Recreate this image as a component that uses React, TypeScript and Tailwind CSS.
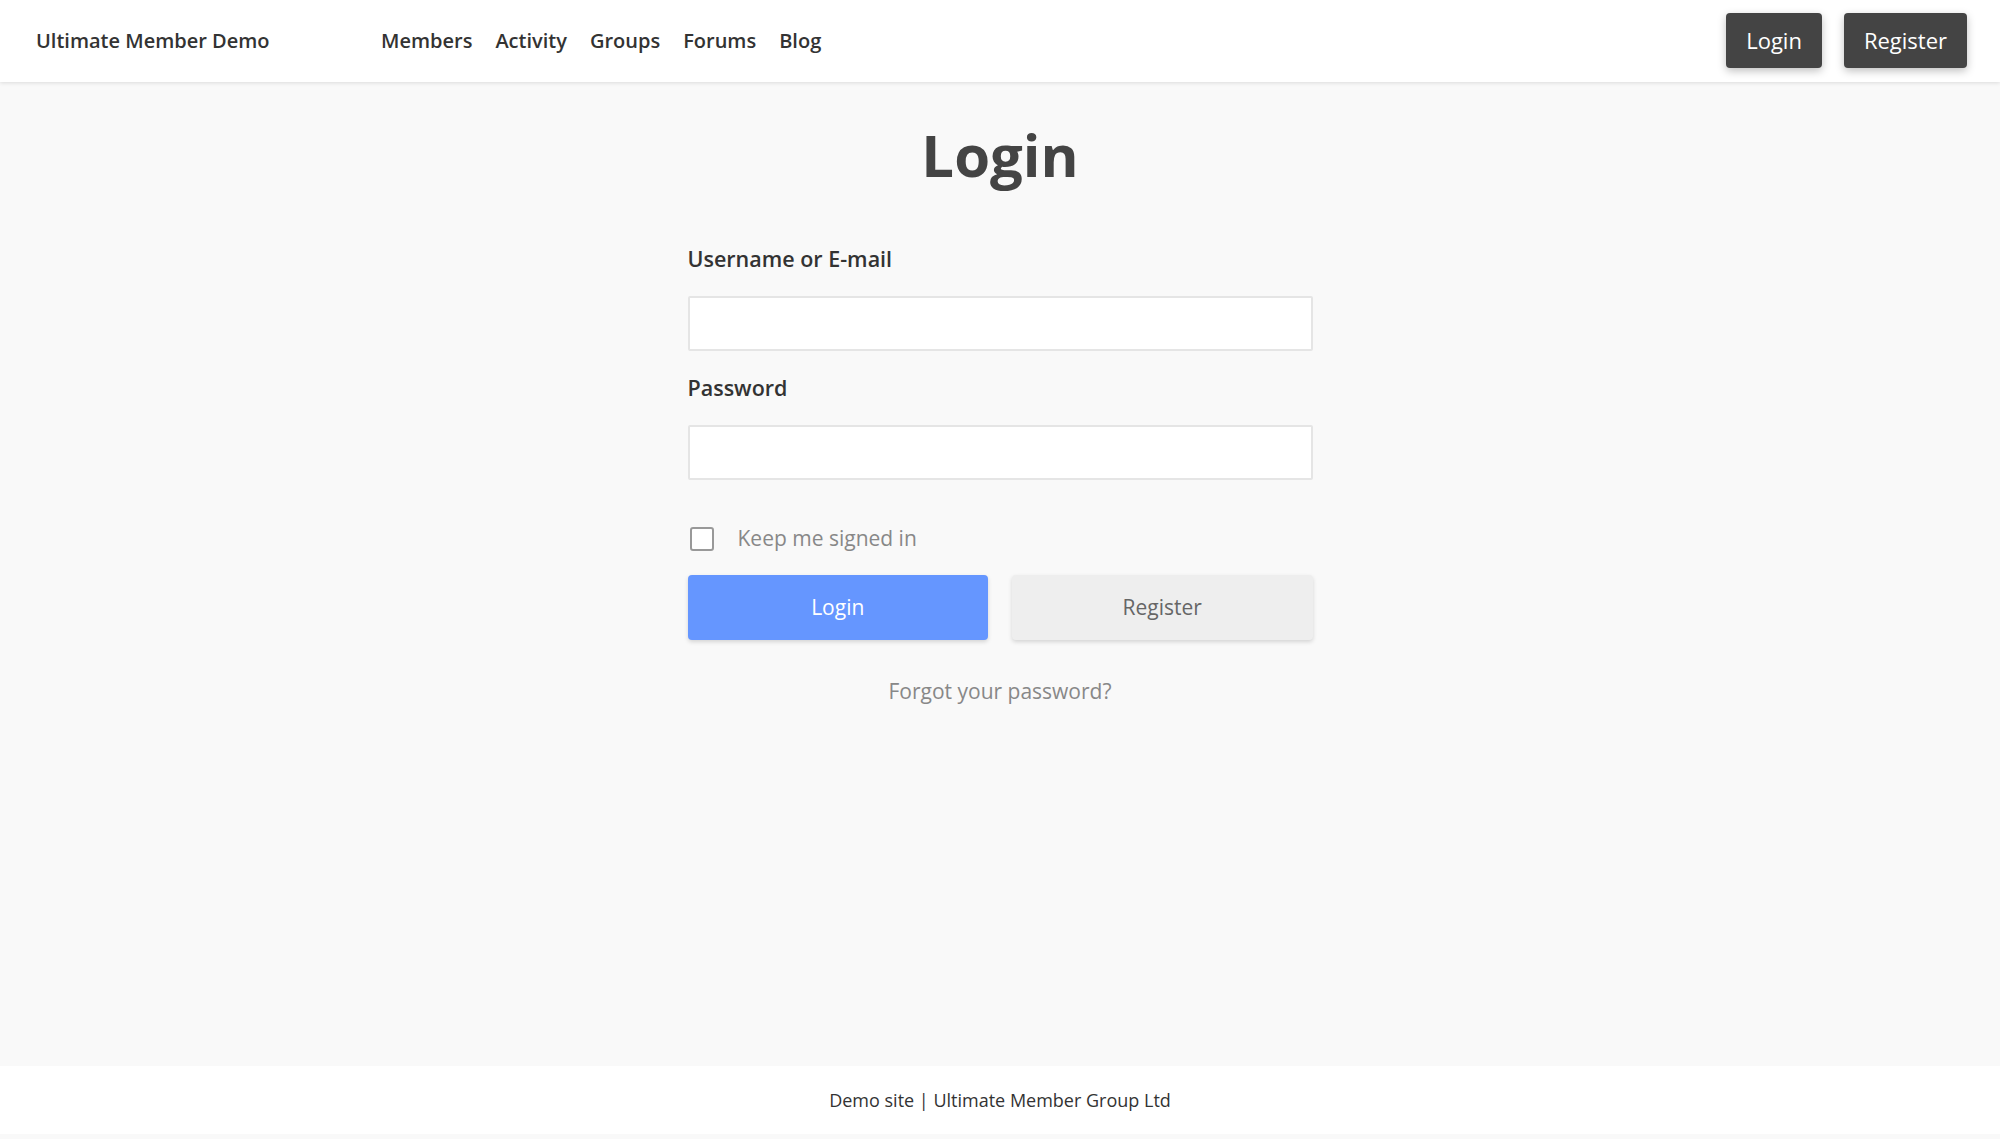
export default function App() {
  const font = { fontFamily: '"Open Sans", "Noto Sans", sans-serif' };
  return (
    <div className="flex h-[1139px] flex-col bg-[#f9f9f9] text-[#333]" style={font}>
      <header className="relative z-10 flex h-[82px] items-center bg-white pl-[36px] pr-[33px] shadow-[0_1px_4px_rgba(0,0,0,0.12)]">
        <a className="w-[345px] text-[20px] font-semibold text-[#333]">Ultimate Member Demo</a>
        <nav className="flex gap-[23px] text-[20px] font-semibold text-[#333]">
          <a>Members</a>
          <a>Activity</a>
          <a>Groups</a>
          <a>Forums</a>
          <a>Blog</a>
        </nav>
        <div className="ml-auto -mt-[2px] flex gap-[22px]">
          <button className="h-[55px] rounded-[4px] bg-[#444] px-[20px] text-[22px] text-white shadow-[0_3px_8px_rgba(0,0,0,0.25)]">
            Login
          </button>
          <button className="h-[55px] rounded-[4px] bg-[#444] px-[20px] text-[22px] text-white shadow-[0_3px_8px_rgba(0,0,0,0.25)]">
            Register
          </button>
        </div>
      </header>

      <main className="flex flex-1 flex-col items-center">
        <h1 className="mt-[37px] text-[58px] font-bold leading-[72px] text-[#444]">Login</h1>
        <form className="mt-[54px] flex w-[625px] flex-col">
          <label className="text-[21.5px] font-semibold leading-[28px] text-[#333]">Username or E-mail</label>
          <input
            type="text"
            className="mt-[23px] h-[55px] rounded-[2px] border-2 border-[#e5e5e5] bg-white px-3 outline-none"
          />
          <label className="mt-[23px] text-[21.5px] font-semibold leading-[28px] text-[#333]">Password</label>
          <input
            type="password"
            className="mt-[23px] h-[55px] rounded-[2px] border-2 border-[#e5e5e5] bg-white px-3 outline-none"
          />
          <div className="mt-[45px] flex h-[28px] items-center gap-[24px]">
            <span className="ml-[2px] h-[24px] w-[24px] rounded-[3px] border-2 border-[#999] bg-white" />
            <span className="text-[21px] text-[#888]">Keep me signed in</span>
          </div>
          <div className="mt-[22px] flex gap-[24px]">
            <button
              type="button"
              className="h-[65px] flex-1 rounded-[4px] bg-[#6596ff] text-[21px] text-white shadow-[0_2px_4px_rgba(0,0,0,0.15)]"
            >
              Login
            </button>
            <button
              type="button"
              className="h-[65px] flex-1 rounded-[4px] bg-[#eeeeee] text-[21px] text-[#666] shadow-[0_2px_4px_rgba(0,0,0,0.15)]"
            >
              Register
            </button>
          </div>
          <a className="mt-[37px] text-center text-[21px] leading-[28px] text-[#888]">Forgot your password?</a>
        </form>
      </main>

      <footer className="mb-[5px] flex h-[68px] items-center justify-center bg-white text-[18px] text-[#333]">
        Demo site | Ultimate Member Group Ltd
      </footer>
    </div>
  );
}
